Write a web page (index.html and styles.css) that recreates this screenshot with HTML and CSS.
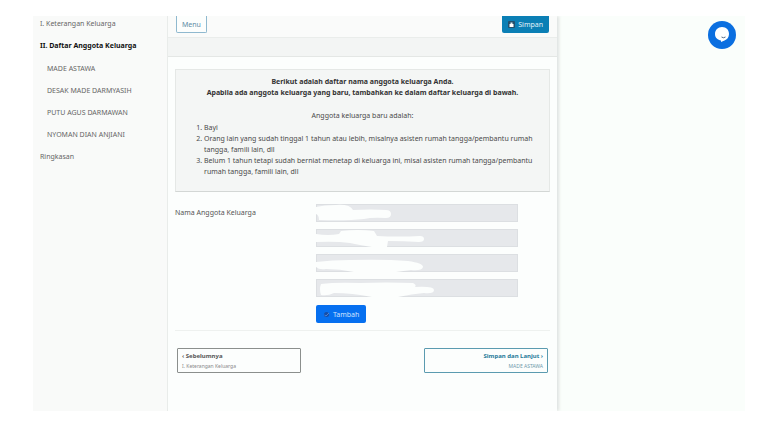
FILE: index.html
```html
<!DOCTYPE html>
<html lang="id">
<head>
    <meta charset="UTF-8">
    <meta name="viewport" content="width=device-width, initial-scale=1.0">
    <title>Daftar Anggota Keluarga</title>
    <link rel="stylesheet" href="styles.css">
</head>
<body>
    <div class="page">
        <nav class="sidebar">
            <a href="#">I. Keterangan Keluarga</a>
            <a href="#" class="active">II. Daftar Anggota Keluarga</a>
            <div class="sub-menu">
                <a href="#">MADE ASTAWA</a>
                <a href="#">DESAK MADE DARMYASIH</a>
                <a href="#">PUTU AGUS DARMAWAN</a>
                <a href="#">NYOMAN DIAN ANJIANI</a>
            </div>
            <a href="#">Ringkasan</a>
        </nav>

        <main class="main">
            <div class="toolbar">
                <button type="button" class="menu-button">Menu</button>
                <button type="button" class="save-button">
                    <svg width="7" height="7" viewBox="0 0 14 14">
                        <rect width="14" height="14" rx="2" fill="#24506c"/>
                        <path d="M3 6h8v6H3z" fill="#fff"/>
                        <path d="M5 6V3h4v3" fill="#dfeaf0"/>
                    </svg>
                    Simpan
                </button>
            </div>
            <div class="band"></div>

            <div class="content">
                <div class="info">
                    <p class="info-title">Berikut adalah daftar nama anggota keluarga Anda.<br>Apabila ada anggota keluarga yang baru, tambahkan ke dalam daftar keluarga di bawah.</p>
                    <p>Anggota keluarga baru adalah:</p>
                    <ol>
                        <li>Bayi</li>
                        <li>Orang lain yang sudah tinggal 1 tahun atau lebih, misalnya asisten rumah tangga/pembantu rumah tangga, famili lain, dll</li>
                        <li>Belum 1 tahun tetapi sudah berniat menetap di keluarga ini, misal asisten rumah tangga/pembantu rumah tangga, famili lain, dll</li>
                    </ol>
                </div>

                <form class="members">
                    <label for="member-1">Nama Anggota Keluarga</label>
                    <div class="fields">
                        <div class="field">
                            <input type="text" id="member-1" disabled>
                            <svg width="120" height="18" viewBox="0 0 120 18"><path d="M0 3Q8 1 20 1Q34 0 37 6Q55 5 70 6Q75 6 75 10Q75 14 70 14Q56 13 48 15Q30 17 3 16Q3 11 0 10Z"/></svg>
                        </div>
                        <div class="field">
                            <input type="text" id="member-2" aria-label="Anggota 2" disabled>
                            <svg width="120" height="18" viewBox="0 0 120 18"><path d="M0 5Q12 7 23 5L25 2Q42 0 58 2L61 7Q82 8 104 7Q108 7 108 10Q108 13 103 13Q88 12 72 12L71 18H56Q43 16 34 14Q20 12 0 13Z"/></svg>
                        </div>
                        <div class="field">
                            <input type="text" id="member-3" aria-label="Anggota 3" disabled>
                            <svg width="120" height="18" viewBox="0 0 120 18"><path d="M0 8Q16 6 34 6Q68 5 92 7Q107 9 107 13Q106 17 95 16L80 18H38Q24 15 10 15Q3 16 0 13Z"/></svg>
                        </div>
                        <div class="field">
                            <input type="text" id="member-4" aria-label="Anggota 4" disabled>
                            <svg width="120" height="18" viewBox="0 0 120 18"><path d="M5 5Q20 3 44 4Q70 3 97 4Q101 6 99 8Q118 7 118 11Q118 15 108 14Q96 15 82 18H56Q36 14 18 14Q12 17 5 16Q3 10 5 5Z"/></svg>
                        </div>
                        <button type="button" class="add-button">
                            <svg width="7" height="7" viewBox="0 0 14 14">
                                <circle cx="7" cy="7" r="5" fill="#174fa8"/>
                                <path d="M3 8l3 2 6-6" fill="none" stroke="#5b83c8" stroke-width="2"/>
                            </svg>
                            Tambah
                        </button>
                    </div>
                </form>

                <div class="steps">
                    <button type="button" class="prev"><b>‹ Sebelumnya</b><small>I. Keterangan Keluarga</small></button>
                    <button type="button" class="next"><b>Simpan dan Lanjut ›</b><small>MADE ASTAWA</small></button>
                </div>
            </div>
        </main>

        <aside class="side">
            <button type="button" class="chat-button" aria-label="Chat">
                <svg width="28" height="28" viewBox="0 0 28 28">
                    <circle cx="14" cy="14" r="14" fill="#0b6fe0"/>
                    <path d="M14 6c4.500 0 7 3 7 7 0 3.500-2 5.500-4.500 6.500L13 21v-1.500C10 19 7 17 7 13c0-4 3-7 7-7z" fill="#fff"/>
                    <path d="M13.500 16q2 1.500 4 0" fill="none" stroke="#566b86" stroke-width="1"/>
                </svg>
            </button>
        </aside>
    </div>
</body>
</html>
```
FILE: styles.css
```css
* {
    box-sizing: border-box;
}

body {
    margin: 0;
    padding: 16px 14px 16px 33px;
    background-color: #fff;
    color: #555;
    font-family: "Noto Sans", "Open Sans", sans-serif;
    font-size: 7px;
    line-height: 11px;
}

button {
    font-family: inherit;
    font-size: 7px;
    line-height: 11px;
    cursor: pointer;
}

p {
    margin: 0;
}

.page {
    display: grid;
    grid-template-columns: 135px minmax(0, 389fr) minmax(40px, 188fr);
    min-height: calc(100vh - 32px);
    background-color: #fafefb;
    overflow: hidden;
}

/* Sidebar */
.sidebar {
    display: flex;
    flex-direction: column;
    gap: 11px;
    padding: 2px 7px;
    background-color: #f9faf9;
    border-right: 1px solid #e9ecea;
}

.sidebar a {
    color: #666;
    text-decoration: none;
}

.sidebar .active {
    color: #111;
    font-weight: bold;
}

.sub-menu {
    display: flex;
    flex-direction: column;
    gap: 11px;
    padding: 1px 7px 0;
}

/* Main column */
.main {
    background-color: #fcfefd;
    box-shadow: 2px 0 3px #dfe3e1;
}

.toolbar {
    display: flex;
    justify-content: space-between;
    height: 21px;
    padding: 0 8px;
    background-color: #fafbfa;
}

.menu-button,
.save-button {
    height: 17px;
    border-radius: 0 0 2px 2px;
}

.menu-button {
    padding: 0 5px;
    background-color: #fcfefd;
    border: 1px solid #8fb9cf;
    border-top: none;
    color: #5f8ca5;
}

.save-button {
    display: flex;
    align-items: center;
    gap: 3px;
    padding: 0 6px;
    background-color: #0b7fb5;
    border: none;
    color: #e4f3fa;
}

.band {
    height: 20px;
    background-color: #f3f5f4;
    border-top: 1px solid #eaedeb;
    border-bottom: 1px solid #e4e7e5;
}

.content {
    padding: 12px 7px 38px;
}

.info {
    padding: 6px 12px 14px;
    background-color: #f4f6f5;
    border: 1px solid #e5e8e6;
    border-bottom-color: #d3d7d5;
    text-align: center;
    color: #4a4a4a;
}

.info-title {
    margin-bottom: 12px;
    color: #333;
    font-weight: bold;
}

.info ol {
    margin: 1px 0 0;
    padding-left: 16px;
    text-align: left;
}

/* Members form */
.members {
    display: grid;
    grid-template-columns: 141px minmax(0, 202px);
    padding: 12px 0 7px;
    border-bottom: 1px solid #eef1ef;
}

.members label {
    padding-top: 3px;
}

.fields {
    display: flex;
    flex-direction: column;
    align-items: flex-start;
    gap: 7px;
}

.field {
    position: relative;
    width: 100%;
    height: 18px;
}

.field input {
    display: block;
    width: 100%;
    height: 18px;
    background-color: #e6e8eb;
    border: 1px solid #dcdfe2;
}

.field svg {
    position: absolute;
    top: 0;
    left: 0;
    fill: #fcfefd;
}

.add-button {
    display: flex;
    align-items: center;
    gap: 3px;
    height: 18px;
    margin-top: 1px;
    padding: 0 7px;
    background-color: #0670f0;
    border: none;
    border-radius: 2px;
    color: #cfe3ff;
}

/* Previous / next */
.steps {
    display: flex;
    justify-content: space-between;
    padding: 17px 2px 0;
}

.steps button {
    display: flex;
    flex-direction: column;
    justify-content: center;
    width: 124px;
    height: 25px;
    padding: 0 4px;
    background-color: #fcfefd;
    border: 1px solid #8b8f8d;
    border-radius: 1px;
    color: #555;
    font-size: 6px;
}

.steps small {
    font-size: 5px;
    line-height: 9px;
    color: #888;
}

.steps .next {
    align-items: flex-end;
    border-color: #5b9bb0;
    color: #1f7a99;
}

.steps .prev {
    align-items: flex-start;
}

.steps .next small {
    color: #6f9aab;
}

/* Chat */
.side {
    display: flex;
    justify-content: flex-end;
    align-items: flex-start;
    padding: 5px 9px;
}

.chat-button {
    display: flex;
    padding: 0;
    background: none;
    border: none;
    border-radius: 50%;
}
```
